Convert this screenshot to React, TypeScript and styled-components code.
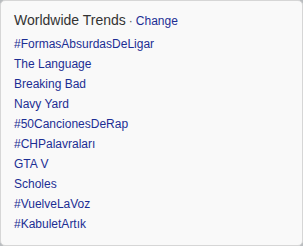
import styled, { createGlobalStyle } from 'styled-components';

const Global = createGlobalStyle`
  html, body {
    margin: 0;
    padding: 0;
    background: #b9bcbf;
  }
  body {
    font-family: "Liberation Sans", Arial, sans-serif;
  }
`;

const Card = styled.div`
  box-sizing: border-box;
  width: 303px;
  height: 246px;
  background: #f9f9f9;
  border: 1px solid #d6d6d6;
  border-radius: 5px;
  padding: 9px 14px 0 13px;
`;

const Header = styled.div`
  display: flex;
  align-items: baseline;
  height: 20px;
  line-height: 20px;
  margin-bottom: 4px;
`;

const Title = styled.h3`
  margin: 0;
  font-size: 14px;
  font-weight: normal;
  color: #333;
`;

const Change = styled.a`
  font-size: 12px;
  color: #1c2e94;
  text-decoration: none;
  margin-left: 3px;
  &::before {
    content: '·';
    color: #555;
    margin-right: 3px;
  }
`;

const List = styled.ul`
  list-style: none;
  margin: 0;
  padding: 0;
`;

const Item = styled.li`
  height: 20px;
  line-height: 20px;
  font-size: 12px;
  color: #1c2e94;
`;

const trends = [
  '#FormasAbsurdasDeLigar',
  'The Language',
  'Breaking Bad',
  'Navy Yard',
  '#50CancionesDeRap',
  '#CHPalavraları',
  'GTA V',
  'Scholes',
  '#VuelveLaVoz',
  '#KabuletArtık',
];

export default function App() {
  return (
    <>
      <Global />
      <Card>
        <Header>
          <Title>Worldwide Trends</Title>
          <Change href="#">Change</Change>
        </Header>
        <List>
          {trends.map((t) => (
            <Item key={t}>{t}</Item>
          ))}
        </List>
      </Card>
    </>
  );
}
